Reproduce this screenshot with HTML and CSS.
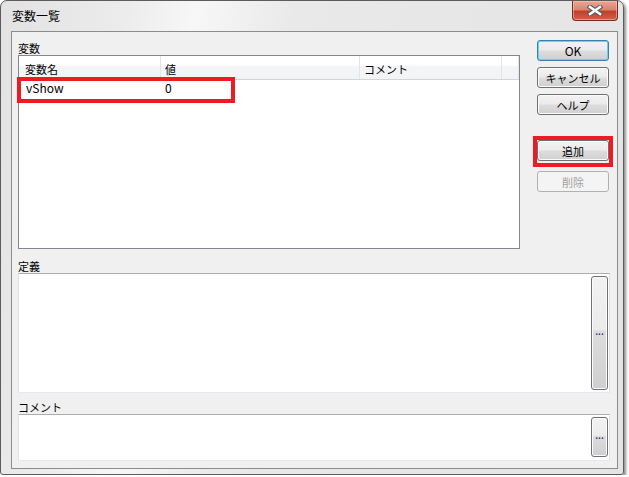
FILE: index.html
```html
<!DOCTYPE html>
<html lang="ja">
<head>
    <meta charset="UTF-8">
    <title>変数一覧</title>
    <link rel="stylesheet" href="styles.css">
</head>
<body>
    <div class="window">
        <div class="titlebar">
            <span class="title">変数一覧</span>
            <button class="close">
                <svg width="16" height="11" viewBox="0 0 16 11">
                    <path d="M3 2 L13 9 M13 2 L3 9" stroke="#5a5a5a" stroke-width="4.6" stroke-linecap="square"/>
                    <path d="M3 2 L13 9 M13 2 L3 9" stroke="#ffffff" stroke-width="2.6" stroke-linecap="square"/>
                </svg>
            </button>
        </div>
        <div class="client">
            <div class="top">
                <div class="vars">
                    <div class="label">変数</div>
                    <div class="list">
                        <div class="list-head">
                            <span class="col col-name">変数名</span>
                            <span class="col col-value">値</span>
                            <span class="col col-comment">コメント</span>
                            <span class="col col-fill"></span>
                        </div>
                        <div class="list-row">
                            <span class="col col-name">vShow</span>
                            <span class="col col-value">0</span>
                            <span class="col col-comment"></span>
                        </div>
                        <div class="mark-row"></div>
                    </div>
                </div>
                <div class="buttons">
                    <button class="btn btn-default">OK</button>
                    <button class="btn">キャンセル</button>
                    <button class="btn">ヘルプ</button>
                    <div class="mark-btn"><button class="btn">追加</button></div>
                    <button class="btn btn-del" disabled>削除</button>
                </div>
            </div>
            <div class="label label-def">定義</div>
            <div class="textbox textbox-def"><button class="dots">...</button></div>
            <div class="label label-comment">コメント</div>
            <div class="textbox textbox-comment"><button class="dots">...</button></div>
        </div>
    </div>
</body>
</html>
```

FILE: styles.css
```css
* {
    margin: 0;
    padding: 0;
    box-sizing: border-box;
}

body {
    background-color: #ffffff;
    font-family: "Noto Sans CJK JP", "Liberation Sans", sans-serif;
    font-size: 12px;
    color: #000000;
}

.window {
    width: 624px;
    height: 475px;
    border: 1px solid #5c5c5c;
    border-radius: 7px 7px 3px 3px;
    padding: 0 5px 5px 10px;
    display: flex;
    flex-direction: column;
    background: linear-gradient(100deg, #e2e2e2 0%, #ececec 18%, #f7f7f7 28%, #e9e9e9 42%, #e4e4e4 100%);
    box-shadow: 2px 2px 3px rgba(0, 0, 0, 0.45);
}

.titlebar {
    height: 30px;
    display: flex;
    align-items: flex-start;
}
.title {
    align-self: center;
    margin-left: 1px;
    line-height: 14px;
    font-size: 12px;
}
.close {
    margin-left: auto;
    width: 46px;
    height: 20px;
    border: 1px solid #7a2a20;
    border-top: none;
    border-radius: 0 0 4px 4px;
    background: linear-gradient(#e9a795 0%, #dc8470 45%, #c1412b 55%, #d2604a 100%);
    box-shadow: inset 0 0 0 1px rgba(255, 210, 200, 0.5);
    display: flex;
    align-items: center;
    justify-content: center;
}

.client {
    flex: 1;
    border: 1px solid #8c8c8c;
    background-color: #f0f0f0;
    padding: 0 7px 0 6px;
    display: flex;
    flex-direction: column;
}

.top {
    display: flex;
    align-items: flex-start;
}

.label {
    height: 14px;
    line-height: 14px;
    font-size: 11px;
}
.vars .label {
    margin-top: 9px;
}

.list {
    position: relative;
    width: 502px;
    height: 194px;
    border: 1px solid #828790;
    background-color: #ffffff;
}
.list-head {
    display: flex;
    height: 24px;
    border-bottom: 1px solid #d5d5d5;
    background: linear-gradient(#ffffff 0%, #ffffff 40%, #f4f5f7 45%, #f3f4f6 100%);
    font-size: 11px;
}
.list-head .col {
    border-right: 1px solid #e3e5e8;
    line-height: 26px;
}
.col {
    display: block;
    height: 100%;
}
.col-name {
    width: 142px;
    padding-left: 6px;
}
.col-value {
    width: 199px;
    padding-left: 4px;
}
.col-comment {
    width: 142px;
    padding-left: 4px;
}
.col-fill {
    flex: 1;
}
.list-row {
    display: flex;
    height: 17px;
    line-height: 16px;
    font-size: 12px;
}
.list-row .col-name {
    padding-left: 7px;
}

.mark-row {
    position: absolute;
    left: -2px;
    top: 21px;
    width: 218px;
    height: 26px;
    border: 4px solid #ed1c24;
}

.buttons {
    margin-left: 17px;
    margin-top: 8px;
    display: flex;
    flex-direction: column;
    gap: 6px;
}
.btn {
    width: 72px;
    height: 21px;
    border: 1px solid #707070;
    border-radius: 3px;
    background: linear-gradient(#f2f2f2 0%, #ebebeb 48%, #dddddd 52%, #cfcfcf 100%);
    box-shadow: inset 0 0 0 1px #fbfbfb;
    font-family: "Noto Sans CJK JP", "Liberation Sans", sans-serif;
    font-size: 11px;
    color: #000000;
}
.btn-default {
    border-color: #3c7fb1;
    box-shadow: inset 0 0 0 1px #5ed4f8;
    font-size: 12px;
}
.mark-btn {
    margin: 15px 0 0 -4px;
    width: 80px;
    border: 4px solid #ed1c24;
    padding-bottom: 2px;
}
.btn-del {
    margin-top: -2px;
    border-color: #adb2b5;
    background: #f4f4f4;
    box-shadow: none;
    color: #a0a0a0;
}

.label-def {
    margin-top: 10px;
}
.label-comment {
    margin-top: 7px;
}
.textbox {
    width: 592px;
    border: 1px solid #e2e3ea;
    border-top-color: #abadb3;
    border-bottom-color: #e3e9ef;
    background-color: #ffffff;
    display: flex;
    justify-content: flex-end;
    padding: 2px 1px 2px 0;
}
.textbox-def {
    height: 120px;
}
.textbox-comment {
    height: 47px;
    padding-bottom: 3px;
}
.dots {
    width: 17px;
    border: 1px solid #707070;
    border-radius: 3px;
    background: linear-gradient(#f2f2f2 0%, #ebebeb 47%, #dddddd 48%, #cfcfcf 100%);
    box-shadow: inset 0 0 0 1px #fbfbfb;
    font-family: "DejaVu Sans Mono", monospace;
    font-size: 8px;
    font-weight: bold;
    line-height: 8px;
    color: #3a2a7a;
    letter-spacing: -2px;
    padding-right: 2px;
}
```
